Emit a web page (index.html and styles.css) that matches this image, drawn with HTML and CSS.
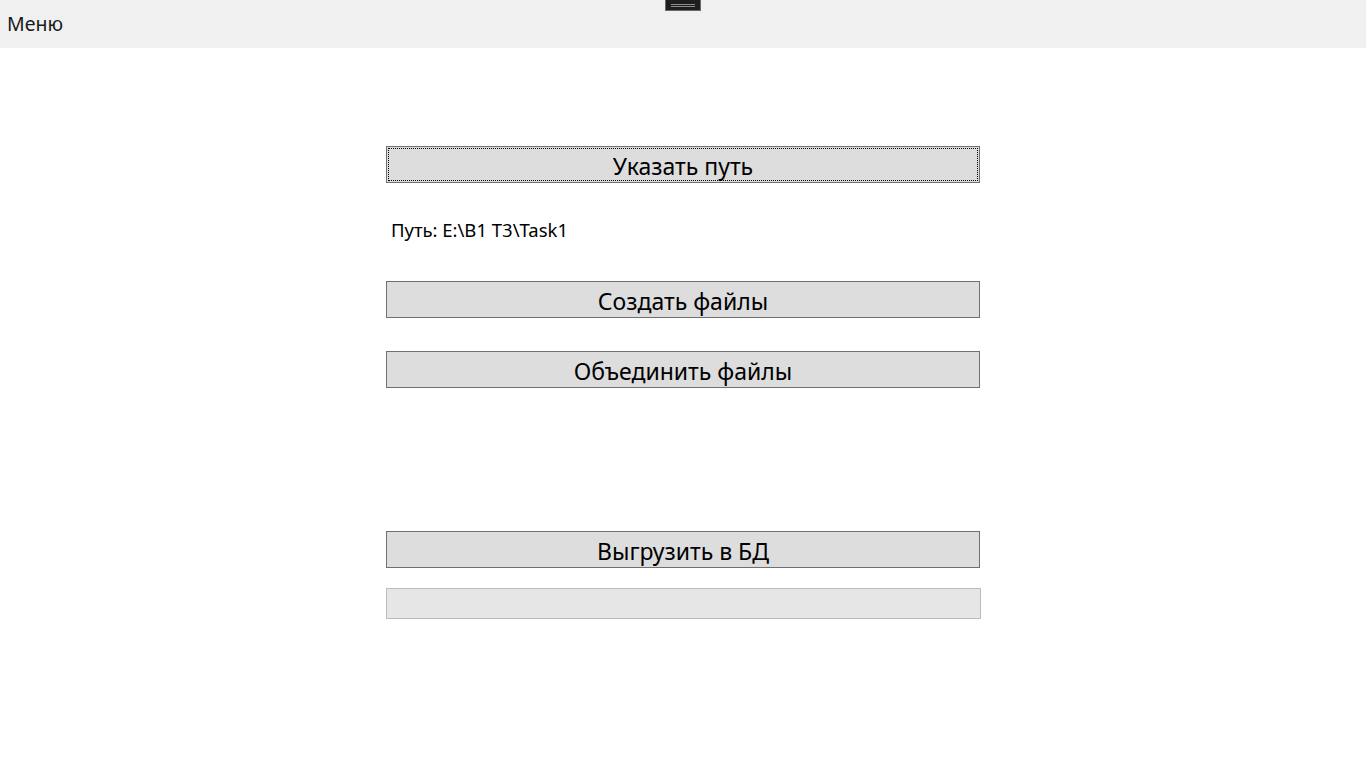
FILE: index.html
```html
<!DOCTYPE html>
<html lang="ru">
<head>
<meta charset="utf-8">
<link rel="stylesheet" href="styles.css">
</head>
<body>
<div class="menubar">
  <span class="menu-item">Меню</span>
  <div class="debug-tool"><span class="line"></span><span class="line"></span></div>
</div>
<main class="content">
  <button class="btn focused">Указать путь</button>
  <div class="path">Путь: E:\B1 T3\Task1</div>
  <button class="btn btn-create">Создать файлы</button>
  <button class="btn btn-merge">Объединить файлы</button>
  <button class="btn btn-upload">Выгрузить в БД</button>
  <div class="progress"></div>
</main>
</body>
</html>
```
FILE: styles.css
```css
html, body {
  margin: 0;
  padding: 0;
  background: #ffffff;
  font-family: "Noto Sans", "Open Sans", sans-serif;
  color: #000;
}
.menubar {
  position: relative;
  height: 48px;
  background: #f0f0f0;
  display: flex;
  align-items: center;
  padding-left: 7px;
}
.menu-item {
  font-size: 19.5px;
  color: #1a1a1a;
  line-height: 24px;
  padding-bottom: 1px;
}
.debug-tool {
  position: absolute;
  left: 665px;
  top: 0;
  width: 34px;
  height: 10px;
  background: #1e1e1e;
  border: 1px solid #6a6a6a;
  border-top: none;
  display: flex;
  flex-direction: column;
  align-items: center;
  justify-content: center;
  gap: 1px;
}
.debug-tool .line {
  display: block;
  width: 24px;
  height: 1px;
  background: #8c8c8c;
}
.content {
  display: flex;
  flex-direction: column;
  width: 594px;
  margin-left: 386px;
  padding-top: 98px;
}
.btn {
  box-sizing: border-box;
  height: 37px;
  width: 594px;
  background: #dddddd;
  border: 1px solid #707070;
  font-family: "Noto Sans", "Open Sans", sans-serif;
  font-size: 23px;
  color: #000;
  padding: 3px 0 0 0;
  margin: 0;
  line-height: 30px;
}
.focused {
  outline: 1px dotted #000;
  outline-offset: -3px;
}
.path {
  font-size: 18.5px;
  padding-left: 5px;
  margin-top: 35px;
  height: 24px;
  line-height: 24px;
}
.btn-create { margin-top: 39px; }
.btn-merge { margin-top: 33px; }
.btn-upload { margin-top: 143px; }
.progress {
  box-sizing: border-box;
  margin-top: 20px;
  width: 595px;
  height: 31px;
  background: #e6e6e6;
  border: 1px solid #bcbcbc;
}
```
